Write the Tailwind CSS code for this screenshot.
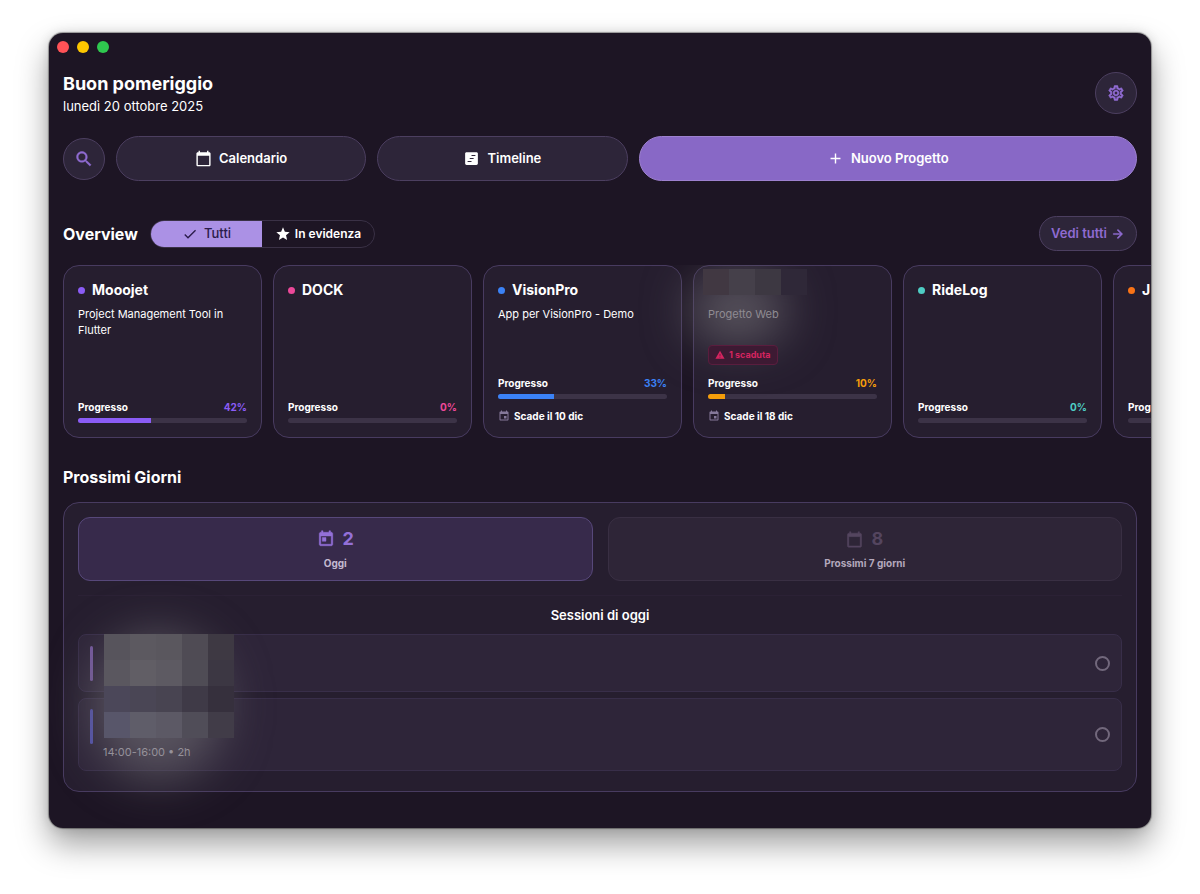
<!DOCTYPE html>
<html lang="it">
<head>
  <meta charset="UTF-8">
  <meta name="viewport" content="width=device-width, initial-scale=1.0">
  <title>Mooojet</title>
  <!-- Tailwind CSS CDN -->
  <script src="https://cdn.jsdelivr.net/npm/@tailwindcss/browser@4"></script>
</head>
<body class="bg-white font-['Inter',sans-serif] text-white px-[49px] pt-[33px] pb-16 overflow-x-hidden">
  <!-- App window -->
  <div class="relative overflow-hidden rounded-[14px] bg-[#1d1524] pb-9 shadow-[0_0_1px_1px_rgba(0,0,0,0.35),0_0_12px_rgba(0,0,0,0.12),0_16px_32px_rgba(0,0,0,0.38)]">
    <!-- Window controls -->
    <div class="flex gap-2 px-2 pt-2">
      <span class="size-3 rounded-full bg-[#ff5257]"></span>
      <span class="size-3 rounded-full bg-[#fdc700]"></span>
      <span class="size-3 rounded-full bg-[#2fc84f]"></span>
    </div>

    <!-- Header -->
    <header class="mt-[19px] flex items-start justify-between px-3.5">
      <div>
        <h1 class="text-lg leading-6 font-bold">Buon pomeriggio</h1>
        <p class="text-[13px] leading-5">lunedì 20 ottobre 2025</p>
      </div>
      <button aria-label="Impostazioni" class="flex size-[42px] items-center justify-center rounded-full border border-[#4c3f60] bg-[#2d2539] text-[#8f6bd1]">
        <svg class="size-[18px]" viewBox="0 0 24 24" fill="currentColor" stroke="currentColor" stroke-width=".7"><path d="M19.43 12.98c.04-.32.07-.64.07-.98s-.03-.66-.07-.98l2.11-1.65c.19-.15.24-.42.12-.64l-2-3.46c-.09-.16-.26-.25-.44-.25-.06 0-.12.01-.17.03l-2.49 1c-.52-.4-1.08-.73-1.69-.98l-.38-2.65C14.46 2.18 14.25 2 14 2h-4c-.25 0-.46.18-.49.42l-.38 2.65c-.61.25-1.17.59-1.69.98l-2.49-1c-.06-.02-.12-.03-.18-.03-.17 0-.34.09-.43.25l-2 3.46c-.13.22-.07.49.12.64l2.11 1.65c-.04.32-.07.65-.07.98s.03.66.07.98l-2.11 1.65c-.19.15-.24.42-.12.64l2 3.46c.09.16.26.25.44.25.06 0 .12-.01.17-.03l2.49-1c.52.4 1.08.73 1.69.98l.38 2.65c.03.24.24.42.49.42h4c.25 0 .46-.18.49-.42l.38-2.65c.61-.25 1.17-.59 1.69-.98l2.49 1c.06.02.12.03.18.03.17 0 .34-.09.43-.25l2-3.46c.12-.22.07-.49-.12-.64l-2.11-1.65zm-1.98-1.71c.04.31.05.52.05.73 0 .21-.02.43-.05.73l-.14 1.13.89.7 1.08.84-.7 1.21-1.27-.51-1.04-.42-.9.68c-.43.32-.84.56-1.25.73l-1.06.43-.16 1.13-.2 1.35h-1.4l-.19-1.35-.16-1.13-1.06-.43c-.43-.18-.83-.41-1.23-.71l-.91-.7-1.06.43-1.27.51-.7-1.21 1.08-.84.89-.7-.14-1.13c-.03-.31-.05-.54-.05-.74s.02-.43.05-.73l.14-1.13-.89-.7-1.08-.84.7-1.21 1.27.51 1.04.42.9-.68c.43-.32.84-.56 1.25-.73l1.06-.43.16-1.13.2-1.35h1.39l.19 1.35.16 1.13 1.06.43c.43.18.83.41 1.23.71l.91.7 1.06-.43 1.27-.51.7 1.21-1.07.85-.89.7.14 1.13zM12 8c-2.21 0-4 1.79-4 4s1.79 4 4 4 4-1.79 4-4-1.79-4-4-4zm0 6c-1.1 0-2-.9-2-2s.9-2 2-2 2 .9 2 2-.9 2-2 2z"/></svg>
      </button>
    </header>

    <!-- Actions -->
    <div class="mt-5 flex items-center gap-[11px] px-3.5 text-[13px] font-semibold">
      <button aria-label="Cerca" class="flex size-[42px] shrink-0 items-center justify-center rounded-full border border-[#4c3f60] bg-[#2d2539] text-[#8f6bd1]">
        <svg class="size-5" viewBox="0 0 24 24" fill="currentColor" stroke="currentColor" stroke-width=".5"><path d="M15.5 14h-.79l-.28-.27C15.41 12.59 16 11.11 16 9.5 16 5.91 13.09 3 9.5 3S3 5.91 3 9.5 5.91 16 9.5 16c1.61 0 3.09-.59 4.23-1.57l.27.28v.79l5 4.99L20.49 19l-4.99-5zm-6 0C7.01 14 5 11.99 5 9.5S7.01 5 9.5 5 14 7.01 14 9.5 11.99 14 9.5 14z"/></svg>
      </button>
      <button class="flex h-[45px] flex-1 items-center justify-center gap-[7px] rounded-full border border-[#4c3f60] bg-[#2d2539]">
        <svg class="size-[17px]" viewBox="0 0 24 24" fill="currentColor"><path d="M20 3h-1V1h-2v2H7V1H5v2H4c-1.1 0-2 .9-2 2v16c0 1.1.9 2 2 2h16c1.1 0 2-.9 2-2V5c0-1.1-.9-2-2-2zm0 18H4V8h16v13z"/></svg>
        Calendario
      </button>
      <button class="flex h-[45px] flex-1 items-center justify-center gap-[7px] rounded-full border border-[#4c3f60] bg-[#2d2539]">
        <svg class="size-[17px]" viewBox="0 0 24 24" fill="currentColor"><path fill-rule="evenodd" d="M19 3H5c-1.1 0-2 .9-2 2v14c0 1.1.9 2 2 2h14c1.1 0 2-.9 2-2V5c0-1.1-.9-2-2-2zM12 7h5.500v1.500H12zM9.500 11.250H15v1.500H9.500zM6.500 15.500H12V17H6.500z"/></svg>
        Timeline
      </button>
      <button class="flex h-[45px] flex-2 items-center justify-center gap-[7px] rounded-full border border-[#9d81cf] bg-[#8868c6]">
        <svg class="size-[17px]" viewBox="0 0 24 24" fill="currentColor"><path d="M19 13h-6v6h-2v-6H5v-2h6V5h2v6h6v2z"/></svg>
        Nuovo Progetto
      </button>
    </div>

    <!-- Overview -->
    <div class="mt-[35px] flex items-center px-3.5">
      <h2 class="text-base leading-6 font-bold">Overview</h2>
      <div class="ml-3 flex h-7 w-[225px] overflow-hidden rounded-full border border-[#3a3146]">
        <button class="flex flex-1 items-center justify-center gap-1.5 bg-[#ab91e5] text-[13px] font-medium text-[#2b1c4a]">
          <svg class="size-4" viewBox="0 0 24 24" fill="currentColor"><path d="M9 16.170 4.830 12l-1.420 1.410L9 19 21 7l-1.410-1.410z"/></svg>
          Tutti
        </button>
        <button class="flex flex-1 items-center justify-center gap-1 text-xs font-semibold">
          <svg class="size-4" viewBox="0 0 24 24" fill="currentColor"><path d="M12 17.270 18.180 21l-1.640-7.030L22 9.240l-7.190-.61L12 2 9.190 8.630 2 9.240l5.460 4.730L5.820 21z"/></svg>
          In evidenza
        </button>
      </div>
      <a href="#" class="ml-auto flex h-[35px] items-center gap-1 rounded-full border border-[#4c3f60] bg-[#2d2539] px-[11px] text-[13px] font-semibold text-[#8f6bd1]">
        Vedi tutti
        <svg class="size-3.5" viewBox="0 0 24 24" fill="currentColor" stroke="currentColor" stroke-width=".8"><path d="m12 4-1.410 1.410L16.170 11H4v2h12.170l-5.580 5.590L12 20l8-8z"/></svg>
      </a>
    </div>

    <!-- Project cards -->
    <div class="mt-3.5 flex gap-[11px] overflow-hidden pl-3.5">
      <article class="flex h-[173px] w-[199px] shrink-0 flex-col rounded-2xl border border-[#483b60] bg-[#261e2f] p-3.5">
        <h3 class="flex items-center gap-[7px] text-sm leading-5 font-bold"><span class="size-[7px] rounded-full bg-[#8b5cf6]"></span>Mooojet</h3>
        <p class="mt-1.5 text-[11px] leading-4">Project Management Tool in Flutter</p>
        <div class="mt-auto flex justify-between text-[10px] leading-4 font-bold"><span>Progresso</span><span class="text-[#8b5cf6]">42%</span></div>
        <div class="mt-[3px] h-[5px] overflow-hidden rounded-full bg-[#3c3347]"><div class="h-full bg-[#8b5cf6]" style="width: 43%"></div></div>
      </article>
      <article class="flex h-[173px] w-[199px] shrink-0 flex-col rounded-2xl border border-[#483b60] bg-[#261e2f] p-3.5">
        <h3 class="flex items-center gap-[7px] text-sm leading-5 font-bold"><span class="size-[7px] rounded-full bg-[#ec4899]"></span>DOCK</h3>
        <div class="mt-auto flex justify-between text-[10px] leading-4 font-bold"><span>Progresso</span><span class="text-[#ec4899]">0%</span></div>
        <div class="mt-[3px] h-[5px] overflow-hidden rounded-full bg-[#3c3347]"></div>
      </article>
      <article class="flex h-[173px] w-[199px] shrink-0 flex-col rounded-2xl border border-[#483b60] bg-[#261e2f] p-3.5">
        <h3 class="flex items-center gap-[7px] text-sm leading-5 font-bold"><span class="size-[7px] rounded-full bg-[#3b82f6]"></span>VisionPro</h3>
        <p class="mt-1.5 text-[11px] leading-4">App per VisionPro - Demo</p>
        <div class="mt-auto flex justify-between text-[10px] leading-4 font-bold"><span>Progresso</span><span class="text-[#3b82f6]">33%</span></div>
        <div class="mt-[3px] h-[5px] overflow-hidden rounded-full bg-[#3c3347]"><div class="h-full bg-[#3b82f6]" style="width: 33%"></div></div>
        <p class="mt-2.5 flex h-3.5 items-center gap-1 text-[10px] font-bold">
          <svg class="size-3 text-[#85799a]" viewBox="0 0 24 24" fill="currentColor"><path d="M17 12h-5v5h5v-5zM16 1v2H8V1H6v2H5c-1.110 0-2 .9-2 2v14c0 1.1.89 2 2 2h14c1.1 0 2-.9 2-2V5c0-1.1-.9-2-2-2h-1V1h-2zm3 18H5V8h14v11z"/></svg>
          Scade il 10 dic
        </p>
      </article>
      <article class="relative flex h-[173px] w-[199px] shrink-0 flex-col rounded-2xl border border-[#483b60] bg-[#261e2f] p-3.5">
        <!-- Obscured project name -->
        <div class="absolute top-3 -left-1 h-16 w-24 rounded-full bg-[#68646b]/80 blur-xl"></div>
        <div class="absolute top-[3px] left-[9px] grid h-[26px] w-[104px] grid-cols-4">
          <span class="bg-[#413842]"></span><span class="bg-[#45404a]"></span><span class="bg-[#3d3842]"></span><span class="bg-[#2f2838]"></span>
        </div>
        <p class="relative mt-[26px] text-[11px] leading-4 text-[#8f8b92]">Progetto Web</p>
        <p class="relative mt-auto flex h-5 items-center gap-1 self-start rounded-sm border border-[#5a1d3e] bg-[#3d1a33] px-1.5 text-[9px] font-bold text-[#d3245f]">
          <svg class="size-2.5" viewBox="0 0 24 24" fill="currentColor"><path d="M1 21h22L12 2 1 21zm12-3h-2v-2h2v2zm0-4h-2v-4h2v4z"/></svg>
          1 scaduta
        </p>
        <div class="mt-2.5 flex justify-between text-[10px] leading-4 font-bold"><span>Progresso</span><span class="text-[#f59e0b]">10%</span></div>
        <div class="mt-[3px] h-[5px] overflow-hidden rounded-full bg-[#3c3347]"><div class="h-full bg-[#f59e0b]" style="width: 10%"></div></div>
        <p class="mt-2.5 flex h-3.5 items-center gap-1 text-[10px] font-bold">
          <svg class="size-3 text-[#85799a]" viewBox="0 0 24 24" fill="currentColor"><path d="M17 12h-5v5h5v-5zM16 1v2H8V1H6v2H5c-1.110 0-2 .9-2 2v14c0 1.1.89 2 2 2h14c1.1 0 2-.9 2-2V5c0-1.1-.9-2-2-2h-1V1h-2zm3 18H5V8h14v11z"/></svg>
          Scade il 18 dic
        </p>
      </article>
      <article class="flex h-[173px] w-[199px] shrink-0 flex-col rounded-2xl border border-[#483b60] bg-[#261e2f] p-3.5">
        <h3 class="flex items-center gap-[7px] text-sm leading-5 font-bold"><span class="size-[7px] rounded-full bg-[#4ecdc4]"></span>RideLog</h3>
        <div class="mt-auto flex justify-between text-[10px] leading-4 font-bold"><span>Progresso</span><span class="text-[#4ecdc4]">0%</span></div>
        <div class="mt-[3px] h-[5px] overflow-hidden rounded-full bg-[#3c3347]"></div>
      </article>
      <article class="flex h-[173px] w-[199px] shrink-0 flex-col rounded-2xl border border-[#483b60] bg-[#261e2f] p-3.5">
        <h3 class="flex items-center gap-[7px] text-sm leading-5 font-bold"><span class="size-[7px] rounded-full bg-[#f97316]"></span>J</h3>
        <div class="mt-auto flex justify-between text-[10px] leading-4 font-bold"><span>Progresso</span></div>
        <div class="mt-[3px] h-[5px] overflow-hidden rounded-full bg-[#3c3347]"></div>
      </article>
    </div>

    <!-- Next days -->
    <h2 class="mt-[27px] px-3.5 text-base leading-6 font-bold">Prossimi Giorni</h2>
    <section class="mx-3.5 mt-[13px] rounded-2xl border border-[#483b60] bg-[#261e2f] px-3.5 pt-3.5 pb-5">
      <div class="grid grid-cols-2 gap-[15px]">
        <button class="flex h-16 flex-col items-center justify-center gap-1 rounded-xl border border-[#57487a] bg-[#372a4b]">
          <span class="flex items-center gap-2 text-lg leading-6 font-bold text-[#9370d8]">
            <svg class="size-[18px]" viewBox="0 0 24 24" fill="currentColor" stroke="currentColor" stroke-width=".6"><path d="M19 3h-1V1h-2v2H8V1H6v2H5c-1.110 0-1.990.9-1.990 2L3 19c0 1.1.89 2 2 2h14c1.1 0 2-.9 2-2V5c0-1.1-.9-2-2-2zm0 16H5V8h14v11zM7 10h5v5H7z"/></svg>
            2
          </span>
          <span class="text-[10px] leading-4 font-bold text-[#c3b9d0]">Oggi</span>
        </button>
        <button class="flex h-16 flex-col items-center justify-center gap-1 rounded-xl border border-[#392f43] bg-[#2e2537]">
          <span class="flex items-center gap-2 text-lg leading-6 font-bold text-[#54455f]">
            <svg class="size-[17px]" viewBox="0 0 24 24" fill="currentColor" stroke="currentColor" stroke-width=".6"><path d="M20 3h-1V1h-2v2H7V1H5v2H4c-1.1 0-2 .9-2 2v16c0 1.1.9 2 2 2h16c1.1 0 2-.9 2-2V5c0-1.1-.9-2-2-2zm0 18H4V8h16v13z"/></svg>
            8
          </span>
          <span class="text-[10px] leading-4 font-bold text-[#b3a8bc]">Prossimi 7 giorni</span>
        </button>
      </div>
      <h3 class="mt-3.5 border-t border-[#2b2135] pt-[7px] text-center text-[13px] leading-6 font-semibold">Sessioni di oggi</h3>

      <div class="relative mt-[7px] flex flex-col gap-1.5">
        <div class="flex h-[58px] items-center justify-between rounded-lg border border-[#382e49] bg-[#2e2539] px-[11px]">
          <span class="h-[35px] w-[3px] rounded-full bg-[#75589f]"></span>
          <input type="checkbox" aria-label="Completa la prima sessione" class="size-[15px] appearance-none rounded-full border-2 border-[#72687c]">
        </div>
        <div class="flex h-[73px] items-center rounded-lg border border-[#382e49] bg-[#2e2539] px-[11px]">
          <span class="mb-4 h-[35px] w-[3px] rounded-full bg-[#5150b0]"></span>
          <p class="relative z-10 ml-2.5 self-end pb-2.5 text-[11px] leading-4 text-[#95919a]">14:00-16:00 • 2h</p>
          <input type="checkbox" aria-label="Completa la seconda sessione" class="ml-auto size-[15px] appearance-none rounded-full border-2 border-[#72687c]">
        </div>
        <!-- Obscured session names -->
        <div class="absolute top-0 left-4 h-36 w-32 rounded-full bg-[#6b686f]/70 blur-xl"></div>
        <div class="absolute top-0 left-[26px] grid h-[104px] w-[130px] grid-cols-5 grid-rows-4">
          <span class="bg-[#57545c]"></span><span class="bg-[#5c5960]"></span><span class="bg-[#5a575e]"></span><span class="bg-[#4f4b54]"></span><span class="bg-[#3e3943]"></span>
          <span class="bg-[#5a575f]"></span><span class="bg-[#615e65]"></span><span class="bg-[#5d5a62]"></span><span class="bg-[#4f4c55]"></span><span class="bg-[#3c3743]"></span>
          <span class="bg-[#4b4759]"></span><span class="bg-[#4a4655]"></span><span class="bg-[#484451]"></span><span class="bg-[#3f3a47]"></span><span class="bg-[#36303d]"></span>
          <span class="bg-[#58566a]"></span><span class="bg-[#5f5d69]"></span><span class="bg-[#5c5965]"></span><span class="bg-[#504d58]"></span><span class="bg-[#413c48]"></span>
        </div>
      </div>
    </section>
  </div>
</body>
</html>
